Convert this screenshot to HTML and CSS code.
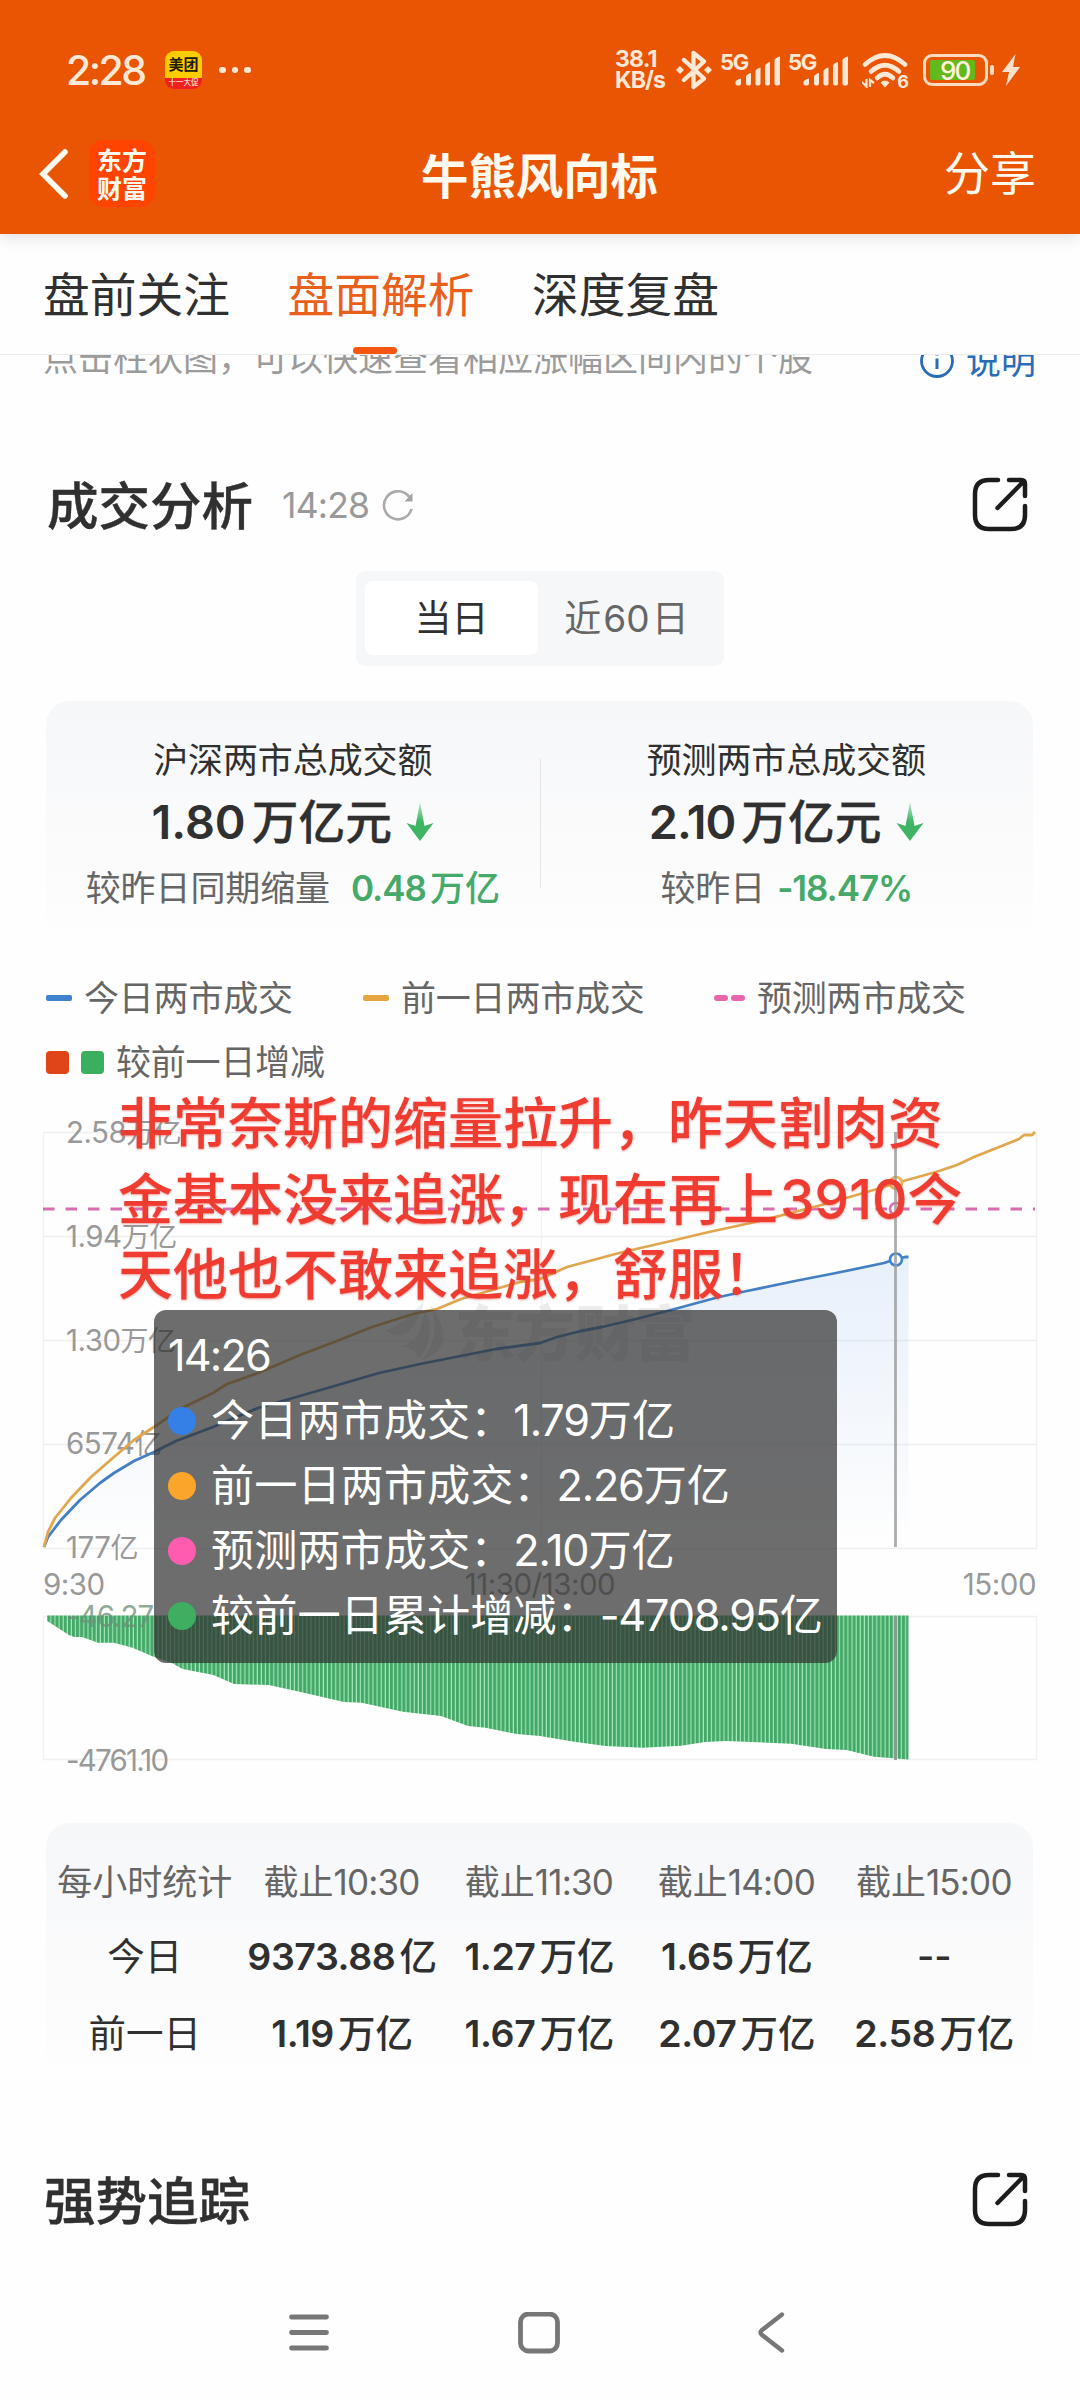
FILE: index.html
```html
<!DOCTYPE html>
<html lang="zh-CN">
<head>
<meta charset="utf-8">
<title>牛熊风向标</title>
<link rel="stylesheet" href="styles.css">
</head>
<body>
<svg class="defs" width="0" height="0" aria-hidden="true">
  <symbol id="share" viewBox="0 0 56 56">
    <path d="M26 3H17Q3 3 3 17V38Q3 52 17 52H39Q53 52 53 38V29M37 3H49Q53 3 53 7V19M51 5L25.500 31" fill="none" stroke="#1c1c1c" stroke-width="4.500" stroke-linecap="round" stroke-linejoin="round"/>
  </symbol>
  <symbol id="down" viewBox="0 0 28 40">
    <path d="M14 0L18.500 24L27.500 21L14 39L.5 21L9.500 24Z" fill="url(#fade)"/>
  </symbol>
  <symbol id="signal" viewBox="0 0 46 30">
    <path d="M.5 26Q.5 24 6 22.500V27.500Q6 29.500 4 29.500H2.500Q.5 29.500 .5 27.500ZM11 20.500Q12 18 16 17V27.500Q16 29.500 14 29.500H13Q11 29.500 11 27.500ZM20.500 15Q21.500 12.500 25.500 11.500V27.500Q25.500 29.500 23.500 29.500H22.500Q20.500 29.500 20.500 27.500ZM30 9.500Q31 7 35 6V27.500Q35 29.500 33 29.500H32Q30 29.500 30 27.500ZM39.500 4Q40.500 1.500 45 .5V27.500Q45 29.500 43 29.500H41.500Q39.500 29.500 39.500 27.500Z" fill="#ffe8d6"/>
  </symbol>
  <defs>
    <linearGradient id="fade" x1="0" y1="0" x2="0" y2="1">
      <stop offset="0" stop-color="#3fb463" stop-opacity=".3"/>
      <stop offset=".5" stop-color="#3fb463"/>
    </linearGradient>
  </defs>
</svg>

<header class="top">
  <div class="status">
    <span class="clock">2:28</span>
    <span class="meituan"><b>美团</b><i>十一大促</i></span>
    <span class="dots"><i></i><i></i><i></i></span>
    <span class="spacer"></span>
    <span class="speed"><span class="s1">38.1</span><span>KB/s</span></span>
    <svg class="bt" width="36" height="40" viewBox="0 0 36 40"><path d="M8 10L28 28.500L17.500 37V3L28 11.500L8 30" fill="none" stroke="#ffe8d6" stroke-width="4.300" stroke-linejoin="round" stroke-linecap="round"/><path d="M4 16L8 20L4 24L0 20ZM32 16L36 20L32 24L28 20Z" fill="#ffe8d6"/></svg>
    <span class="cell"><b>5G</b><svg width="46" height="30"><use href="#signal"/></svg></span>
    <span class="cell second"><b>5G</b><svg width="46" height="30"><use href="#signal"/></svg></span>
    <span class="wifi"><svg width="47" height="36" viewBox="0 0 47 36"><g fill="none" stroke="#ffe8d6" stroke-width="4.600" stroke-linecap="round"><path d="M3 12.500Q23 -5.500 43 12.500"/><path d="M9 19.500Q23 7 37 19.500"/><path d="M15 26Q23 18.500 31 26"/></g><path d="M18.500 30.500Q23 26.500 27.500 30.500L23 35.500Z" fill="#ffe8d6"/><path d="M0 30L4.500 34.500V27M8 35V28L12 31" fill="none" stroke="#ffe8d6" stroke-width="2.200"/></svg><b>6</b></span>
    <span class="battery"><b>90</b></span>
    <i class="cap"></i>
    <svg class="bolt" width="18" height="32" viewBox="0 0 18 32"><path d="M13.500 0L0 18H7L4 32L18 13H11Z" fill="#ffe0cc"/></svg>
  </div>
  <div class="bar">
    <svg class="back" width="30" height="52" viewBox="0 0 30 52"><path d="M26 4L4 26L26 48" fill="none" stroke="#fffaf0" stroke-width="5.600" stroke-linecap="round"/></svg>
    <span class="logo">东方<br>财富</span>
    <h1>牛熊风向标</h1>
    <a class="share-link">分享</a>
  </div>
</header>

<nav class="tabs">
  <a>盘前关注</a><a class="on">盘面解析</a><a>深度复盘</a>
</nav>

<div class="tip">
  <span>点击柱状图，可以快速查看相应涨幅区间内的个股</span>
  <a><svg width="36" height="36" viewBox="0 0 36 36"><circle cx="18" cy="18" r="15.500" fill="none" stroke="#2a6cb5" stroke-width="2.800"/><path d="M18 15.500V26M18 9.500V12.500" stroke="#2a6cb5" stroke-width="3"/></svg>说明</a>
</div>

<section class="head first">
  <h2>成交分析</h2><span class="time">14:28</span>
  <svg class="refresh" width="34" height="32" viewBox="0 0 34 32"><path d="M30.500 20A14 14 0 1 1 27 6.500L30 9.500" fill="none" stroke="#aaa" stroke-width="2.600"/><path d="M31.500 4V12.500H23.500Z" fill="#a2a2a2"/></svg>
  <span class="spacer"></span>
  <svg class="ext" width="56" height="56"><use href="#share"/></svg>
</section>

<div class="segment"><span class="on">当日</span><span>近<em>60</em>日</span></div>

<section class="card summary">
  <div class="stat">
    <p class="label">沪深两市总成交额</p>
    <p class="value"><em>1.80</em>万亿元<svg width="28" height="40"><use href="#down"/></svg></p>
    <p class="delta">较昨日同期缩量<b class="wide"><em>0.48</em>万亿</b></p>
  </div>
  <div class="stat">
    <p class="label">预测两市总成交额</p>
    <p class="value two"><em>2.10</em>万亿元<svg width="28" height="40"><use href="#down"/></svg></p>
    <p class="delta">较昨日<b class="pct">-18.47%</b></p>
  </div>
</section>

<div class="legend">
  <span class="l1"><i class="dash blue"></i>今日两市成交</span>
  <span class="l2"><i class="dash gold"></i>前一日两市成交</span>
  <span class="l3"><i class="dot"></i><i class="dot"></i>预测两市成交</span>
</div>
<div class="legend squares"><i class="sq red"></i><i class="sq green"></i>较前一日增减</div>

<section class="chart">
  <svg class="plot" width="1080" height="680" viewBox="0 1100 1080 680">
    <defs>
      <linearGradient id="area" x1="0" y1="1257" x2="0" y2="1548" gradientUnits="userSpaceOnUse">
        <stop offset="0" stop-color="#2f7de0" stop-opacity=".11"/><stop offset="1" stop-color="#2f7de0" stop-opacity="0"/>
      </linearGradient>
      <pattern id="bars" x="47.200" y="0" width="4.130" height="10" patternUnits="userSpaceOnUse">
        <rect width="4.130" height="10" fill="#a5ecbb"/><rect width="3.050" height="10" fill="#45a869"/>
      </pattern>
    </defs>
    <path d="M43.500 1132.500H1036.500M43.500 1236.500H1036.500M43.500 1340.500H1036.500M43.500 1444.500H1036.500M43.500 1548.500H1036.500M43.500 1132V1549M541.500 1132V1549M1036.500 1132V1549M43.500 1616.500H1036.500V1759.500H43.500Z" fill="none" stroke="#f0f0f0" stroke-width="1.300"/>
    <g class="watermark">
      <path d="M386 1330Q397 1326 407 1318L424 1302Q420 1320 408 1332Q396 1340 386 1330ZM430 1304Q449 1330 441 1346Q435 1356 422 1360Q431 1350 434 1334Q436 1320 430 1304ZM425 1310Q434 1330 426 1348Q422 1356 418 1358Q416 1348 402 1346Q416 1342 420 1330Q423 1321 425 1310Z"/>
      <text x="455" y="1356">东方财富</text>
    </g>
    <g class="axis">
      <text x="66" y="1143">2.58<tspan>万亿</tspan></text>
      <text x="66" y="1247">1.94<tspan>万亿</tspan></text>
      <text x="66" y="1351">1.30<tspan>万亿</tspan></text>
      <text x="66" y="1454">6574<tspan>亿</tspan></text>
      <text x="66" y="1558">177<tspan>亿</tspan></text>
      <text x="43" y="1595">9:30</text>
      <text x="540" y="1595" text-anchor="middle">11:30/13:00</text>
      <text x="1036" y="1595" text-anchor="end">15:00</text>
      <text x="66" y="1771" class="low">-4761.10</text>
    </g>
    <path fill="url(#area)" d="M44 1547L48 1537 61 1520 80 1500 100 1483 114 1473 134 1461 154 1452 176 1441 213 1427 258 1408 331 1387 379 1373 420 1364 496 1349 540 1343 557 1337 581 1331 602 1327 636 1319 671 1310 719 1297 747 1291 795 1281 836 1273 884 1263 896 1259 905 1257 908.500 1257V1548H44Z"/>
    <path d="M43 1209H1035" stroke="#d96cae" stroke-width="2.800" stroke-dasharray="11.500 11"/>
    <path class="line" stroke="#437fc2" d="M44 1547L48 1537 61 1520 80 1500 100 1483 114 1473 134 1461 154 1452 176 1441 213 1427 258 1408 331 1387 379 1373 420 1364 496 1349 540 1343 557 1337 581 1331 602 1327 636 1319 671 1310 719 1297 747 1291 795 1281 836 1273 884 1263 896 1259 905 1257 908.500 1257"/>
    <path class="line" stroke="#e0a74f" d="M44 1547L48 1532 55 1518 71 1498 91 1477 114 1457 134 1440 154 1427 182 1408 213 1393 227 1384 258 1373 300 1355 337 1341 372 1327 413 1314 437 1309 461 1299 499 1288 520 1282 540 1279 567 1267 623 1252 671 1241 709 1232 760 1221 802 1210 829 1203 877 1189 896 1183 936 1172 957 1165 974 1157 1019 1139 1024 1135 1032 1135 1035 1132"/>
    <g class="marks"><circle cx="896" cy="1183" r="6" stroke="#e8b04f"/><circle cx="896" cy="1209" r="6" stroke="#e06bb5"/><circle cx="896" cy="1259.500" r="6" stroke="#3f84cf"/></g>
    <path fill="url(#bars)" d="M47.200 1615.500V1621L69 1635 74 1637 82 1637 98 1642.700 114 1642.700 132.600 1647.700 154 1657 172 1663 182.500 1669 213.500 1675 234 1684 268.600 1685 299.600 1691.700 344 1702 361.600 1702.700 403 1711.700 441 1716 468 1726 485.500 1727.700 516.500 1734 540 1736 574.400 1741.700 605.400 1746 643 1747.700 681 1745.700 705 1742 726 1741 791 1743.700 826 1749 846.500 1750 874 1756.700 908.500 1759.500V1615.500Z"/>
    <text class="over" x="66" y="1627">-46.27</text>
    <path d="M895.500 1132V1547" stroke="#999" stroke-opacity=".8" stroke-width="2.800"/><path d="M895.500 1616V1760" stroke="#8b9c90" stroke-width="2.800"/>
  </svg>
  <div class="tooltip">
    <p class="at">14:26</p>
    <p><i class="c1"></i>今日两市成交：<em>1.79</em>万亿</p>
    <p><i class="c2"></i>前一日两市成交：<em>2.26</em>万亿</p>
    <p><i class="c3"></i>预测两市成交：<em>2.10</em>万亿</p>
    <p><i class="c4"></i>较前一日累计增减：<em>-4708.95</em>亿</p>
  </div>
  <p class="note">非常奈斯的缩量拉升，昨天割肉资<br>金基本没来追涨，现在再上<em>3910</em>今<br>天他也不敢来追涨，舒服！</p>
</section>

<section class="card hourly">
  <div class="row th"><span>每小时统计</span><span>截止<em>10:30</em></span><span>截止<em>11:30</em></span><span>截止<em>14:00</em></span><span>截止<em>15:00</em></span></div>
  <div class="row"><span>今日</span><b><em>9373.88</em>亿</b><b><em>1.27</em>万亿</b><b><em>1.65</em>万亿</b><b>--</b></div>
  <div class="row"><span>前一日</span><b><em>1.19</em>万亿</b><b><em>1.67</em>万亿</b><b><em>2.07</em>万亿</b><b><em>2.58</em>万亿</b></div>
</section>

<section class="head second-head">
  <h2>强势追踪</h2>
  <span class="spacer"></span>
  <svg class="ext" width="56" height="56"><use href="#share"/></svg>
</section>

<footer class="keys">
  <svg width="40" height="40" viewBox="0 0 40 40"><path d="M2.500 4H37.500M2.500 19.500H37.500M2.500 35H37.500" stroke="#777" stroke-width="4.800" stroke-linecap="round"/></svg>
  <svg width="42" height="42" viewBox="0 0 42 42"><rect x="2.500" y="2" width="37" height="37" rx="8" fill="none" stroke="#777" stroke-width="4.800"/></svg>
  <svg width="28" height="42" viewBox="0 0 28 42"><path d="M25 2.500L4.500 18.500Q2.500 20.500 4.500 22.500L25 38.500" fill="none" stroke="#777" stroke-width="4.400" stroke-linecap="round"/></svg>
</footer>
</body>
</html>
```
FILE: styles.css
```css
* { box-sizing: border-box; }
body {
  margin: 0;
  width: 1080px;
  height: 2400px;
  overflow: hidden;
  background: #fefefe;
  color: #303030;
  font-family: Inter, "Noto Sans CJK SC", sans-serif;
  font-size: 35px;
}
p, h1, h2 { margin: 0; }
i, em { font-style: normal; }
.defs { position: absolute; }
.spacer { flex: 1; }

/* status bar and title */
.top {
  position: relative;
  height: 234px;
  background: #ea5504;
  box-shadow: 0 2px 16px rgba(0, 0, 0, .14);
  color: #fffaf0;
}
.status {
  display: flex;
  align-items: center;
  height: 120px;
  padding: 20px 60px 0 66px;
  color: #ffe8d6;
}
.clock { width: 99px; font-size: 41px; line-height: 50px; letter-spacing: -2.600px; font-weight: 500; }
.meituan {
  width: 37px;
  height: 38px;
  border-radius: 9px;
  overflow: hidden;
  background: linear-gradient(#fc0 0 70%, #f02020 70%);
  text-align: center;
  color: #201800;
}
.meituan b { display: block; height: 26px; font-size: 15px; line-height: 28px; }
.meituan i { display: block; width: 37px; font-size: 7.500px; line-height: 11px; color: #fff; white-space: nowrap; }
.dots { display: flex; gap: 6px; margin-left: 17px; }
.dots i { width: 6.500px; height: 6.500px; border-radius: 50%; background: #ffe8d6; }
.speed { width: 61px; font-size: 23px; line-height: 21px; font-weight: 700; }
.speed span { display: block; letter-spacing: -.9px; }
.speed .s1 { letter-spacing: -.8px; }
.cell { display: flex; width: 60px; height: 40px; margin-left: 8px; }
.cell b { width: 15px; font-size: 22px; line-height: 30px; margin-top: -3px; letter-spacing: -1.200px; white-space: nowrap; }
.cell svg { flex: none; margin-top: 6px; }
.second { margin-left: 8px; }
.wifi { position: relative; margin-left: 14px; height: 36px; width: 47px; }
.wifi b { position: absolute; right: 0; bottom: -3px; font-size: 18px; line-height: 18px; }
.battery {
  width: 65px;
  height: 32px;
  margin-left: 14px;
  border: 3px solid #ffdcc0;
  border-radius: 9px;
  padding: 3px 10px 3px 4px;
}
.battery b {
  display: block;
  height: 20px;
  background: #63b81c;
  border-radius: 2px;
  font-size: 26px;
  line-height: 21px;
  font-weight: 500;
  letter-spacing: -2px;
  padding-left: 10px;
  color: #fff3dc;
}
.cap { width: 4px; height: 10px; margin: 0 8px 0 2px; border-radius: 2px; background: #ffdcc0; }
.bar { position: relative; display: flex; align-items: center; height: 108px; padding: 0 44px 0 39px; }
.logo {
  width: 66px;
  height: 67px;
  margin-left: 20px;
  margin-top: -2px;
  padding-top: 7px;
  border-radius: 15px;
  background: #ff4300;
  text-align: center;
  font-size: 25px;
  line-height: 28px;
  font-weight: 700;
}
.bar h1 { flex: 1; font-size: 47.400px; line-height: 60px; font-weight: 600; padding: 5px 0 0 266px; }
.share-link { font-size: 46px; line-height: 60px; margin-top: -3px; }

.tabs {
  display: flex;
  gap: 57.500px;
  height: 121px;
  padding-left: 43px;
  border-bottom: 1px solid #ececec;
  font-size: 46.750px;
  line-height: 123px;
}
.tabs a { position: relative; }
.tabs .on { color: #e8601a; }
.tabs .on::after {
  content: "";
  position: absolute;
  left: 65px;
  bottom: 0;
  width: 44px;
  height: 7px;
  border-radius: 4px;
  background: #f4560f;
}

.tip {
  display: flex;
  justify-content: space-between;
  height: 40px;
  overflow: hidden;
  padding: 0 44px 0 43px;
  line-height: 40px;
  color: #9b9b9b;
}
.tip span { margin-top: -17px; letter-spacing: 0; }
.tip a { display: flex; align-items: center; gap: 11px; height: 40px; margin-top: -14px; color: #2a6cb5; }

.head { display: flex; align-items: center; padding: 0 52px 0 47px; height: 60px; }
.head h2 { font-size: 51.500px; line-height: 60px; font-weight: 500; padding-top: 2px; -webkit-text-stroke: .4px #303030; }
.head.first { margin-top: 80px; }
.time { margin-left: 29px; font-size: 35.500px; letter-spacing: -.8px; color: #999; padding-top: 1px; }
.refresh { margin-left: 12px; }

.segment {
  display: flex;
  width: 368px;
  height: 95px;
  margin: 36px auto 0;
  padding: 10px 9px 11px;
  border-radius: 9px;
  background: #f6f7f9;
  font-size: 37px;
  line-height: 76px;
  text-align: center;
  color: #666;
}
.segment span { width: 177px; height: 74px; }
.segment .on { width: 173px; background: #fff; border-radius: 8px; color: #303030; }
.segment em { padding: 0 2px; }

.card {
  margin: 0 47px 0 46px;
  border-radius: 24px 24px 0 0;
  background: linear-gradient(#f6f7f9, #fdfdfd);
}
.summary { display: grid; grid-template-columns: 1fr 1fr; height: 227px; margin-top: 35px; }
.stat { padding-top: 34px; text-align: center; }
.stat + .stat { position: relative; }
.stat + .stat::before { content: ""; position: absolute; left: 0; top: 58px; width: 1px; height: 129px; background: #e4e4e4; }
.label { line-height: 50px; letter-spacing: -.1px; }
.value { display: flex; justify-content: center; align-items: center; height: 74px; font-size: 46.750px; line-height: 74px; font-weight: 500; -webkit-text-stroke: .3px #303030; }
.value em { margin-right: 6px; font-weight: 600; -webkit-text-stroke: 0; }
.value svg { margin-left: 14px; }
.two em { letter-spacing: -1px; }
.delta { line-height: 58px; color: #666; letter-spacing: -.1px; white-space: nowrap; }
.delta b { color: #45a96a; font-weight: 500; }
.delta em { font-weight: 600; letter-spacing: -1px; }
.delta .wide { margin-left: 21px; }
.delta .wide em { margin-right: 4px; }
.delta .pct { margin-left: 12px; letter-spacing: -1.100px; font-weight: 600; }

.legend { display: flex; align-items: center; height: 50px; margin: 45px 46px 0; color: #666; line-height: 50px; letter-spacing: -.2px; }
.legend .l1 { width: 317px; }
.legend .l2 { width: 351px; }
.legend span { display: flex; align-items: center; }
.dash { width: 26px; height: 6px; margin-right: 12px; border-radius: 2px; }
.blue { background: #3f80cf; }
.gold { background: #e8a640; }
.dot { width: 14px; height: 6px; margin-right: 3px; border-radius: 3px; background: #e966aa; }
.dot + .dot { margin-right: 12px; }
.squares { margin-top: 14px; }
.sq { width: 23px; height: 23px; border-radius: 4px; margin-right: 12px; }
.red { background: #df4518; }
.green { background: #3cae60; }

/* turnover chart */
.chart { position: relative; height: 680px; margin-top: 13px; }
.plot { display: block; }
.axis, .over { font-size: 29.500px; fill: #999; letter-spacing: -.5px; }
.low { letter-spacing: -1.800px; }
.over { fill: #6b8f77; fill-opacity: .75; letter-spacing: -1px; }
.axis tspan { font-size: 28px; }
.watermark { fill: #ebebec; font-size: 60px; font-weight: 900; }
.line { fill: none; stroke-width: 2.800; stroke-linejoin: round; }
.marks circle { fill: #fff; stroke-width: 2.600; }
.tooltip {
  position: absolute;
  left: 154px;
  top: 210px;
  width: 683px;
  height: 353px;
  padding: 13px 0 0 14px;
  border-radius: 12px;
  background: rgba(50, 50, 50, .71);
  color: #fff;
  font-size: 43.200px;
  line-height: 65px;
  white-space: nowrap;
}
.tooltip p { display: flex; align-items: center; height: 65px; }
.tooltip em { letter-spacing: -1.200px; }
.tooltip .at { letter-spacing: -1.800px; }
.tooltip i { width: 28px; height: 28px; margin-right: 15px; border-radius: 50%; }
.c1 { background: #3480e6; }
.c2 { background: #fba52b; }
.c3 { background: #ff5cae; }
.c4 { background: #3eae61; }
.note {
  position: absolute;
  left: 118px;
  top: -14px;
  font-size: 55px;
  line-height: 75.700px;
  font-weight: 500;
  color: #f03b31;
  white-space: nowrap;
  text-shadow: 0 1px 2px rgba(220, 60, 50, .5);
}
.note em { padding-left: 2px; }

.hourly { height: 240px; margin-top: 43px; padding-top: 21px; }
.row { display: grid; grid-template-columns: repeat(5, 1fr); height: 77px; line-height: 77px; font-size: 37.500px; text-align: center; white-space: nowrap; }
.row b { font-weight: 500; }
.row b em { font-weight: 600; letter-spacing: -.4px; margin-right: 4px; }
.th { font-size: 35px; height: 74px; color: #666; }
.row.th em { letter-spacing: -.8px; margin-right: 1px; }

.second-head { margin-top: 107px; padding-left: 44px; }
.keys { display: flex; align-items: center; height: 44px; margin-top: 81px; padding-left: 289px; }
.keys svg:nth-child(2) { margin-left: 189px; }
.keys svg:nth-child(3) { margin-left: 197px; }
```
